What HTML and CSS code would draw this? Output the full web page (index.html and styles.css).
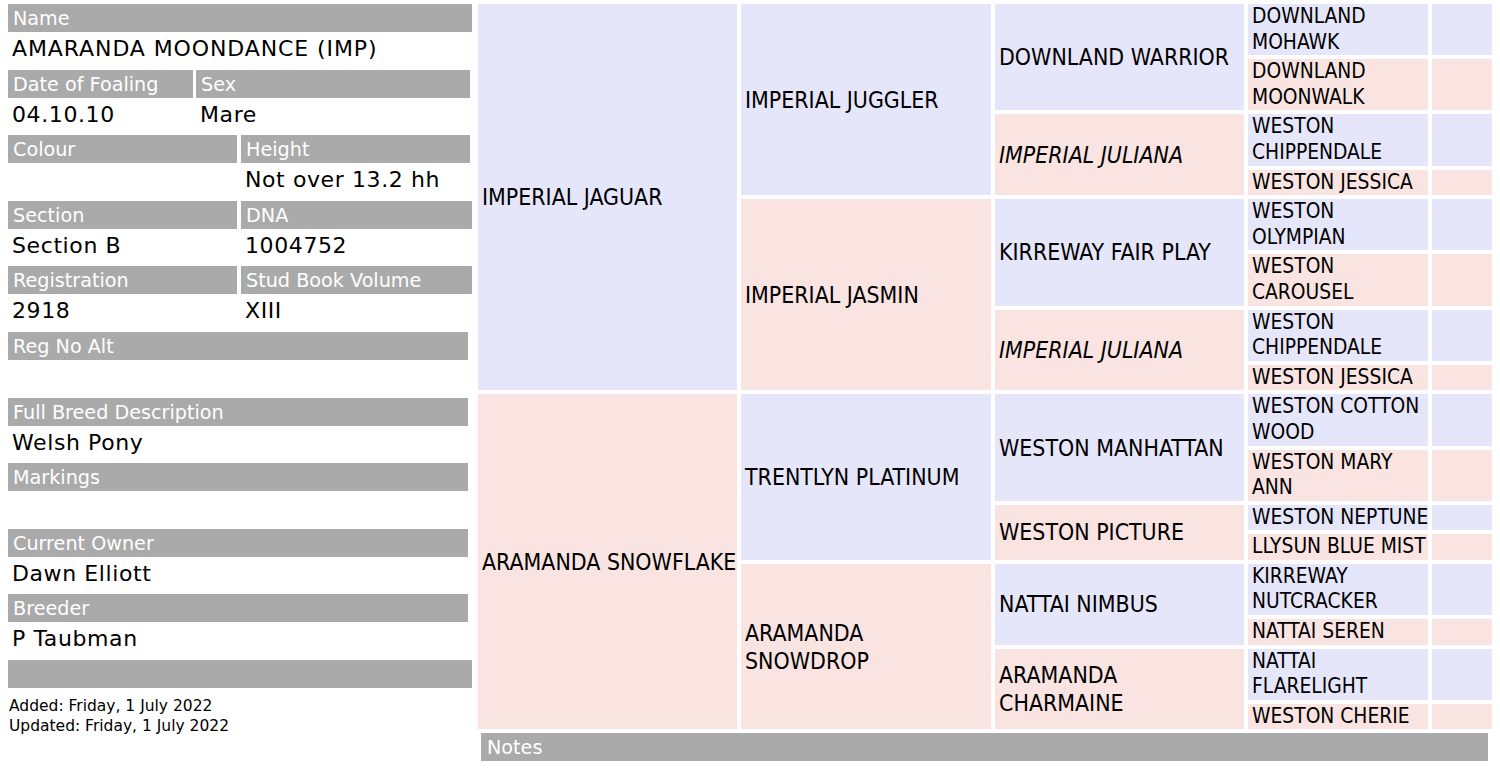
FILE: index.html
```html
<!DOCTYPE html>
<html>
<head>
<meta charset="utf-8">
<link rel="stylesheet" href="styles.css">
</head>
<body>
<div class="page">
  <aside class="info">
    <section class="blk w464">
      <div class="hd">Name</div>
      <div class="val name">AMARANDA MOONDANCE (IMP)</div>
    </section>
    <section class="blk pair p-date">
      <div class="hd">Date of Foaling</div><div class="hd">Sex</div>
      <div class="val">04.10.10</div><div class="val">Mare</div>
    </section>
    <section class="blk pair p-colour">
      <div class="hd">Colour</div><div class="hd">Height</div>
      <div class="val"></div><div class="val">Not over 13.2 hh</div>
    </section>
    <section class="blk pair p-section">
      <div class="hd">Section</div><div class="hd">DNA</div>
      <div class="val">Section B</div><div class="val">1004752</div>
    </section>
    <section class="blk pair p-section">
      <div class="hd">Registration</div><div class="hd">Stud Book Volume</div>
      <div class="val">2918</div><div class="val">XIII</div>
    </section>
    <section class="blk w460">
      <div class="hd">Reg No Alt</div>
      <div class="val"></div>
    </section>
    <section class="blk w460">
      <div class="hd">Full Breed Description</div>
      <div class="val">Welsh Pony</div>
    </section>
    <section class="blk w460">
      <div class="hd">Markings</div>
      <div class="val"></div>
    </section>
    <section class="blk w460">
      <div class="hd">Current Owner</div>
      <div class="val">Dawn Elliott</div>
    </section>
    <section class="blk w460">
      <div class="hd">Breeder</div>
      <div class="val">P Taubman</div>
    </section>
    <section class="blk w464 last">
      <div class="hd"></div>
    </section>
    <div class="stamp">
      <div>Added: Friday, 1 July 2022</div>
      <div>Updated: Friday, 1 July 2022</div>
    </div>
  </aside>

  <main class="pedwrap">
    <div class="ped">
      <div class="c g1 m r1">IMPERIAL JAGUAR</div>
      <div class="c g2 m r1">IMPERIAL JUGGLER</div>
      <div class="c g3 m r1">DOWNLAND WARRIOR</div>
      <div class="c g4 m">DOWNLAND<br>MOHAWK</div><div class="c g5 m"></div>
      <div class="c g4 f">DOWNLAND<br>MOONWALK</div><div class="c g5 f"></div>
      <div class="c g3 f r3"><i>IMPERIAL JULIANA</i></div>
      <div class="c g4 m">WESTON<br>CHIPPENDALE</div><div class="c g5 m"></div>
      <div class="c g4 f">WESTON JESSICA</div><div class="c g5 f"></div>
      <div class="c g2 f r5">IMPERIAL JASMIN</div>
      <div class="c g3 m r5">KIRREWAY FAIR PLAY</div>
      <div class="c g4 m">WESTON<br>OLYMPIAN</div><div class="c g5 m"></div>
      <div class="c g4 f">WESTON<br>CAROUSEL</div><div class="c g5 f"></div>
      <div class="c g3 f r7"><i>IMPERIAL JULIANA</i></div>
      <div class="c g4 m">WESTON<br>CHIPPENDALE</div><div class="c g5 m"></div>
      <div class="c g4 f">WESTON JESSICA</div><div class="c g5 f"></div>
      <div class="c g1 f r9">ARAMANDA SNOWFLAKE</div>
      <div class="c g2 m r9">TRENTLYN PLATINUM</div>
      <div class="c g3 m r9">WESTON MANHATTAN</div>
      <div class="c g4 m">WESTON COTTON<br>WOOD</div><div class="c g5 m"></div>
      <div class="c g4 f">WESTON MARY<br>ANN</div><div class="c g5 f"></div>
      <div class="c g3 f r11">WESTON PICTURE</div>
      <div class="c g4 m">WESTON NEPTUNE</div><div class="c g5 m"></div>
      <div class="c g4 f">LLYSUN BLUE MIST</div><div class="c g5 f"></div>
      <div class="c g2 f r13">ARAMANDA<br>SNOWDROP</div>
      <div class="c g3 m r13">NATTAI NIMBUS</div>
      <div class="c g4 m">KIRREWAY<br>NUTCRACKER</div><div class="c g5 m"></div>
      <div class="c g4 f">NATTAI SEREN</div><div class="c g5 f"></div>
      <div class="c g3 f r15">ARAMANDA<br>CHARMAINE</div>
      <div class="c g4 m">NATTAI<br>FLARELIGHT</div><div class="c g5 m"></div>
      <div class="c g4 f">WESTON CHERIE</div><div class="c g5 f"></div>
    </div>
    <div class="notes">Notes</div>
  </main>
</div>
</body>
</html>
```

FILE: styles.css
```css
html, body {
  margin: 0;
  padding: 0;
  background: #ffffff;
}
body {
  font-family: "DejaVu Sans", Verdana, sans-serif;
  color: #000;
}
.page {
  display: flex;
  align-items: flex-start;
  padding-left: 8px;
}
.info {
  width: 464px;
  padding-top: 4px;
  display: flex;
  flex-direction: column;
}
.blk {
  margin-bottom: 3.6px;
}
.w464 { width: 464px; }
.w460 { width: 460px; }
.pair {
  display: grid;
  row-gap: 0;
}
.p-date { width: 462px; grid-template-columns: 185px 274px; column-gap: 3px; }
.p-colour { width: 462px; grid-template-columns: 229px 229px; column-gap: 4px; }
.p-section { width: 464px; grid-template-columns: 229px 231px; column-gap: 4px; }
.hd {
  background: #aaaaaa;
  color: #ffffff;
  height: 28px;
  line-height: 30px;
  font-size: 19.2px;
  padding-left: 5px;
  white-space: nowrap;
  overflow: hidden;
}
.val {
  height: 34px;
  line-height: 34px;
  font-size: 22px;
  letter-spacing: 0.6px;
  padding-left: 4px;
  white-space: nowrap;
}
.val.name {
  letter-spacing: 0.9px;
}
.last {
  margin-bottom: 0;
}
.stamp {
  padding-top: 8px;
  padding-left: 1px;
  font-size: 15.5px;
  line-height: 20px;
}

.pedwrap {
  margin-left: 2px;
  width: 1022px;
}
.ped {
  display: grid;
  grid-template-columns: 259px 250px 249px 180px 60px;
  grid-auto-rows: auto;
  gap: 4px;
  padding: 4px;
  font-family: "DejaVu Sans Condensed", "DejaVu Sans", sans-serif;
  font-stretch: condensed;
}
.c {
  display: flex;
  align-items: center;
  white-space: nowrap;
  padding-left: 4px;
  min-height: 25.5px;
}
.m { background: #e6e6fa; }
.f { background: #f9e4e2; }
.g1 { grid-column: 1; grid-row-end: span 8; font-size: 22.9px; line-height: 28px; }
.g2 { grid-column: 2; grid-row-end: span 4; font-size: 22.9px; line-height: 28px; }
.g3 { grid-column: 3; grid-row-end: span 2; font-size: 22.9px; line-height: 28px; }
.g4 { grid-column: 4; font-size: 20.8px; line-height: 25.6px; }
.g5 { grid-column: 5; }
.r1 { grid-row-start: 1; }
.r3 { grid-row-start: 3; }
.r5 { grid-row-start: 5; }
.r7 { grid-row-start: 7; }
.r9 { grid-row-start: 9; }
.r11 { grid-row-start: 11; }
.r13 { grid-row-start: 13; }
.r15 { grid-row-start: 15; }
.notes {
  margin: 0 8px 0 7px;
  background: #aaaaaa;
  color: #ffffff;
  height: 28px;
  line-height: 30px;
  font-size: 19.2px;
  padding-left: 6px;
}
```
